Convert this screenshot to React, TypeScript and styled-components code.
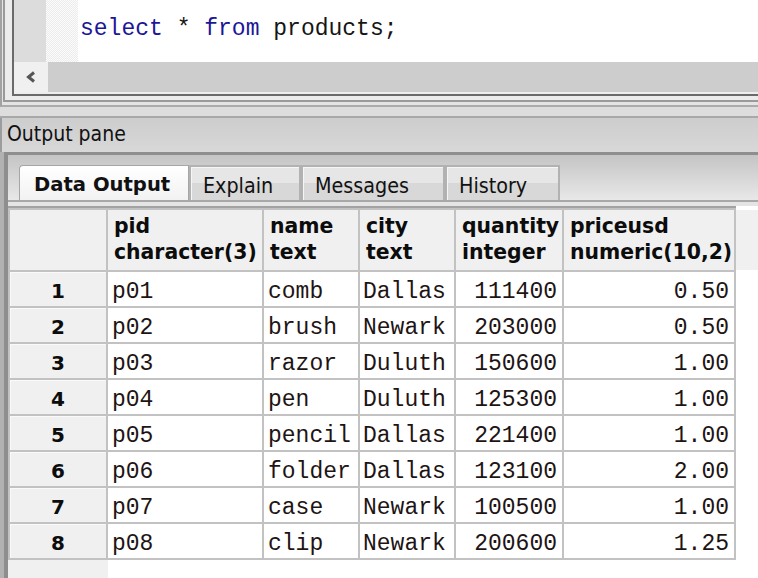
import React from 'react';
import styled, { createGlobalStyle } from 'styled-components';

const Global = createGlobalStyle`
  html, body { margin: 0; padding: 0; }
  body {
    width: 758px; height: 578px; overflow: hidden;
    background: #d6d6d6;
    font-family: "DejaVu Sans Condensed", "DejaVu Sans", sans-serif;
  }
  * { box-sizing: border-box; }
`;

const Window = styled.div`
  width: 758px; height: 578px;
  display: flex; flex-direction: column;
  background: #d6d6d6;
`;

/* ---------- editor ---------- */
const EditorOuter = styled.div`
  background: #e4e4e4;
  border-left: 2px solid #a2a2a2;
  border-bottom: 2px solid #ababab;
  padding: 0 0 3px 1px;
`;
const EditorMid = styled.div`
  background: #ececec;
  border-left: 2px solid #9a9a9a;
  border-bottom: 2px solid #9a9a9a;
  padding: 0 0 4px 7px;
`;
const EditorInner = styled.div`
  background: #eeeeee;
  border-left: 2px solid #6a6a6a;
  border-bottom: 2px solid #6a6a6a;
  padding-bottom: 2px;
`;
const CodeArea = styled.div`
  height: 62px;
  display: flex;
  background: #fff;
`;
const Gutter = styled.div`
  width: 32px;
  background: #dcdcdc;
`;
const FoldMargin = styled.div`
  width: 32px;
  background-color: #fbfbfb;
  background-image: repeating-conic-gradient(#ececec 0 25%, #fbfbfb 0 50%);
  background-size: 2px 2px;
`;
const CodeText = styled.div`
  flex: 1;
  padding: 16px 0 0 2px;
  font-family: "Liberation Mono", "Courier New", monospace;
  font-size: 23px;
  line-height: 26px;
  color: #151515;
  white-space: pre;
`;
const Keyword = styled.span`
  color: #1c1698;
`;
const HScroll = styled.div`
  height: 30px;
  display: flex;
`;
const ArrowButton = styled.div`
  width: 34px;
  background: #f0f0f0;
  display: flex; align-items: center; justify-content: center;
`;
const Track = styled.div`
  flex: 1;
  background: #cdcdcd;
`;
const Splitter = styled.div`
  height: 11px;
  background: #dddddd;
  border-bottom: 2px solid #a8a8a8;
`;

/* ---------- output pane ---------- */
const PaneTitle = styled.div`
  height: 34px;
  background: linear-gradient(#cdcdcd, #d8d8d8);
  border-left: 2px solid #9c9c9c;
  padding: 2px 0 0 5px;
  font-size: 21px;
  line-height: 28px;
  color: #111;
`;
const TabOuter = styled.div`
  flex: 1;
  display: flex;
  border-left: 4px solid #b2b2b2;
  min-height: 0;
`;
const TabFrame = styled.div`
  flex: 1;
  display: flex; flex-direction: column;
  border-left: 4px solid #8e8e8e;
  border-top: 3px solid #8e8e8e;
  min-height: 0;
`;
const TabStrip = styled.div`
  height: 47px;
  display: flex; align-items: flex-end;
  padding-left: 11px;
  background: linear-gradient(#c4c4c4, #e8e8e8);
  border-bottom: 2px solid #a8a8a8;
`;
const Tab = styled.div<{ $active?: boolean; $w: number }>`
  width: ${p => p.$w}px;
  height: 35px;
  padding: 2px 0 0 ${p => (p.$active ? 14 : 12)}px;
  font-family: ${p => (p.$active ? '"DejaVu Sans", sans-serif' : '"DejaVu Sans Condensed", "DejaVu Sans", sans-serif')};
  font-size: ${p => (p.$active ? 19.6 : 21.3)}px;
  line-height: 33px;
  color: #111;
  font-weight: ${p => (p.$active ? 700 : 400)};
  border: ${p => (p.$active ? '1px solid #a6a6a6' : '2px solid #b2b2b2')};
  border-bottom: none;
  background: ${p =>
    p.$active
      ? 'linear-gradient(#ffffff, #f2f2f2)'
      : 'linear-gradient(#e6e6e6 0 50%, #d8d8d8 50% 100%)'};
  box-shadow: ${p => (p.$active ? 'none' : 'inset 1px 1px 0 #f6f6f6')};
  border-top-left-radius: ${p => (p.$active ? 4 : 0)}px;
  white-space: nowrap;
`;

const PanelBody = styled.div`
  flex: 1;
  border-top: 4px solid #e4e4e4;
  background:
    linear-gradient(#f0f0f0, #f0f0f0) 0 0 / 100px 100% no-repeat,
    linear-gradient(#f0f0f0, #f0f0f0) 0 4px / 100% 60px no-repeat,
    #ffffff;
  overflow: hidden;
`;
const Grid = styled.div`
  display: grid;
  width: 728px;
  grid-template-columns: 96px 154px 94px 94px 106px 170px;
  grid-auto-rows: 34px;
  grid-template-rows: 60px;
  gap: 2px;
  padding: 2px;
  background: #c2c2c2;
  border-top: 2px solid #a2a2a2;
`;
const HeadCell = styled.div`
  background: #f0f0f0;
  padding: 3px 0 0 6px;
  font-family: "DejaVu Sans", sans-serif;
  font-weight: 700;
  font-size: 20.4px;
  line-height: 26px;
  color: #0c0c0c;
  white-space: nowrap;
  overflow: hidden;
`;
const RowNum = styled.div`
  background: #f0f0f0;
  box-shadow: inset 1px 1px 0 #fafafa;
  text-align: center;
  font-family: "DejaVu Sans", sans-serif;
  font-weight: 700;
  font-size: 20px;
  line-height: 26px;
  padding-top: 6px;
  color: #0c0c0c;
`;
const Cell = styled.div<{ $right?: boolean; $pl?: number }>`
  background: #fff;
  font-family: "Liberation Mono", "Courier New", monospace;
  font-size: 23px;
  line-height: 26px;
  padding: 7px 5px 0 ${p => p.$pl ?? 4}px;
  text-align: ${p => (p.$right ? 'right' : 'left')};
  color: #1e1414;
  white-space: nowrap;
  overflow: hidden;
`;

const headers: [string, string][] = [
  ['pid', 'character(3)'],
  ['name', 'text'],
  ['city', 'text'],
  ['quantity', 'integer'],
  ['priceusd', 'numeric(10,2)'],
];

const rows: [string, string, string, string, string][] = [
  ['p01', 'comb', 'Dallas', '111400', '0.50'],
  ['p02', 'brush', 'Newark', '203000', '0.50'],
  ['p03', 'razor', 'Duluth', '150600', '1.00'],
  ['p04', 'pen', 'Duluth', '125300', '1.00'],
  ['p05', 'pencil', 'Dallas', '221400', '1.00'],
  ['p06', 'folder', 'Dallas', '123100', '2.00'],
  ['p07', 'case', 'Newark', '100500', '1.00'],
  ['p08', 'clip', 'Newark', '200600', '1.25'],
];

const tabs: [string, number][] = [
  ['Data Output', 170],
  ['Explain', 112],
  ['Messages', 144],
  ['History', 115],
];

export default function App() {
  return (
    <Window>
      <Global />
      <EditorOuter>
        <EditorMid>
          <EditorInner>
            <CodeArea>
              <Gutter />
              <FoldMargin />
              <CodeText>
                <Keyword>select</Keyword> * <Keyword>from</Keyword> products;
              </CodeText>
            </CodeArea>
            <HScroll>
              <ArrowButton>
                <svg width="12" height="12" viewBox="0 0 12 12">
                  <path d="M9 1.5 L3.5 6 L9 10.5" fill="none" stroke="#555" strokeWidth="3" strokeLinejoin="miter" />
                </svg>
              </ArrowButton>
              <Track />
            </HScroll>
          </EditorInner>
        </EditorMid>
      </EditorOuter>
      <Splitter />
      <PaneTitle>Output pane</PaneTitle>
      <TabOuter>
        <TabFrame>
          <TabStrip>
            {tabs.map(([t, w], i) => (
              <Tab key={t} $w={w} $active={i === 0}>
                {t}
              </Tab>
            ))}
          </TabStrip>
          <PanelBody>
            <Grid>
              <HeadCell />
              {headers.map(([a, b]) => (
                <HeadCell key={a}>
                  {a}
                  <br />
                  {b}
                </HeadCell>
              ))}
              {rows.map((r, i) => (
                <React.Fragment key={r[0]}>
                  <RowNum>{i + 1}</RowNum>
                  <Cell>{r[0]}</Cell>
                  <Cell>{r[1]}</Cell>
                  <Cell $pl={3}>{r[2]}</Cell>
                  <Cell $right>{r[3]}</Cell>
                  <Cell $right>{r[4]}</Cell>
                </React.Fragment>
              ))}
            </Grid>
          </PanelBody>
        </TabFrame>
      </TabOuter>
    </Window>
  );
}
